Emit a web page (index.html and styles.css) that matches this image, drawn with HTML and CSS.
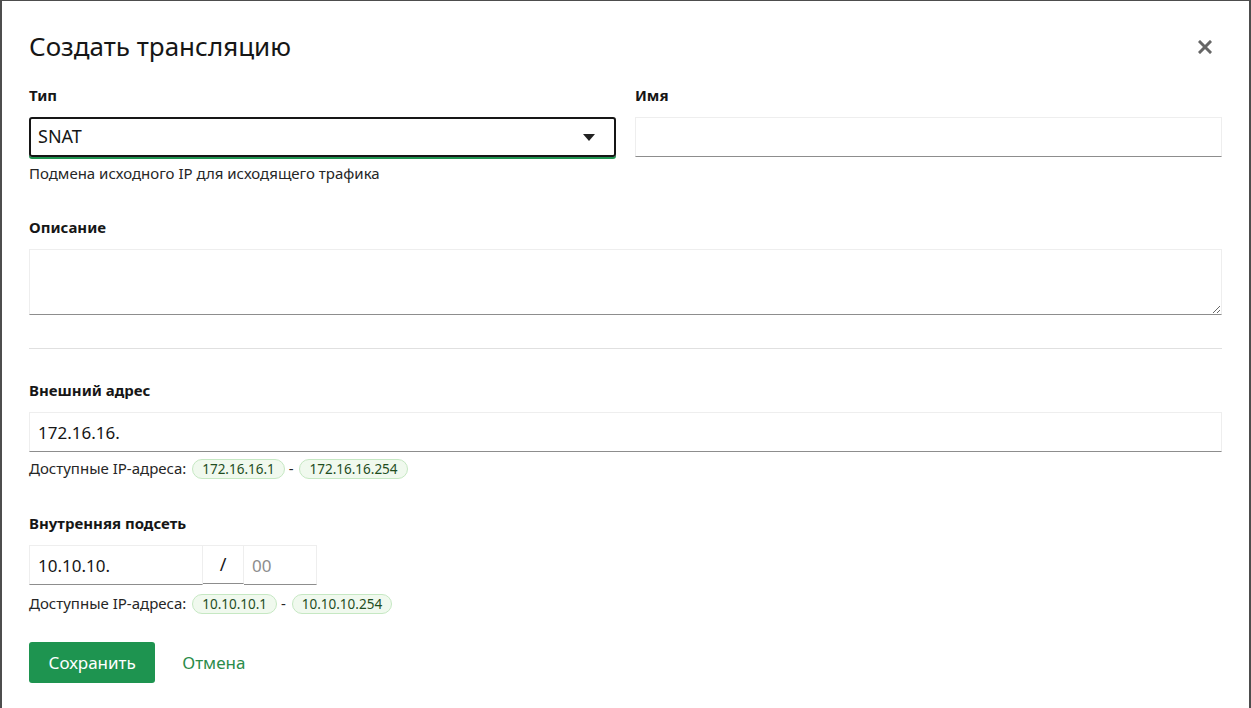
FILE: index.html
```html
<!DOCTYPE html>
<html lang="ru">

<head>
  <meta charset="utf-8" />
  <title>Создать трансляцию</title>
  <link rel="stylesheet" href="styles.css">
</head>

<body>
  <div class="modal">
    <div class="modal-header">
      <h2>Создать трансляцию</h2>
      <button class="close" type="button" aria-label="Закрыть">
        <svg width="14" height="14" viewBox="0 0 14 14">
          <path d="M2 2 L12 12 M12 2 L2 12" stroke="#666" stroke-width="3" stroke-linecap="square" />
        </svg>
      </button>
    </div>

    <form>
      <div class="row">
        <div class="field field-type">
          <label for="type">Тип</label>
          <div class="select">
            <span>SNAT</span>
            <svg width="12" height="7" viewBox="0 0 12 7"><path d="M0 0 H12 L6 7 Z" fill="#222" /></svg>
          </div>
          <p class="hint">Подмена исходного IP для исходящего трафика</p>
        </div>
        <div class="field">
          <label for="name">Имя</label>
          <input type="text" id="name" class="input">
        </div>
      </div>

      <div class="field field-descr">
        <label for="descr">Описание</label>
        <textarea id="descr" class="input textarea"></textarea>
      </div>

      <hr>

      <div class="field">
        <label for="ext">Внешний адрес</label>
        <input type="text" id="ext" class="input" value="172.16.16.">
        <p class="hint">Доступные IP-адреса: <span class="pill">172.16.16.1</span> - <span class="pill">172.16.16.254</span></p>
      </div>

      <div class="field field-last">
        <label for="net">Внутренняя подсеть</label>
        <div class="subnet">
          <input type="text" id="net" class="input net" value="10.10.10.">
          <span class="slash">/</span>
          <input type="text" class="input mask" placeholder="00">
        </div>
        <p class="hint hint-net">Доступные IP-адреса: <span class="pill">10.10.10.1</span> - <span class="pill">10.10.10.254</span></p>
      </div>

      <div class="actions">
        <button type="button" class="btn-primary">Сохранить</button>
        <button type="button" class="btn-link">Отмена</button>
      </div>
    </form>
  </div>
</body>

</html>
```

FILE: styles.css
```css
* {
  box-sizing: border-box;
}

body {
  margin: 0;
  height: 708px;
  overflow: hidden;
  background-color: #4d4d4d;
  color: #161616;
  font: 14px / 1.4 "Noto Sans", "Open Sans", sans-serif;
  padding: 1px 2px 0 2px;
}

.modal {
  background-color: #fff;
  height: 100%;
  padding: 0 27px;
}

.modal-header {
  display: flex;
  align-items: center;
  justify-content: space-between;
  height: 84px;
  padding-top: 7px;
}

.modal-header h2 {
  margin: 0;
  font-size: 26px;
  font-weight: 400;
  color: #161616;
}

.close {
  border: 0;
  background: none;
  padding: 0;
  margin-right: 10px;
  display: flex;
}

.row {
  display: grid;
  grid-template-columns: 1fr 1fr;
  column-gap: 19px;
}

.field {
  display: flex;
  flex-direction: column;
  margin-bottom: 34px;
}

.field-type {
  margin-bottom: 33px;
}

.field-descr {
  margin-bottom: 33px;
}

.field-last {
  margin-bottom: 28px;
}

label {
  font-weight: 700;
  font-size: 15px;
  height: 20px;
  margin-bottom: 12px;
}

.input {
  height: 40px;
  width: 100%;
  border: 1px solid #eeeeee;
  border-bottom-color: #8d8d8d;
  font: inherit;
  font-size: 17px;
  padding: 0 8px;
  color: #161616;
  outline: none;
}

.select {
  height: 40px;
  display: flex;
  align-items: center;
  justify-content: space-between;
  border: 2px solid #161616;
  border-radius: 3px;
  padding: 0 19px 0 7px;
  font-size: 18px;
  box-shadow: 0 2px 0 #1e9450;
}

.hint {
  margin: 6px 0 0;
  font-size: 15px;
  color: #262626;
}

.hint-net {
  margin-top: 8px;
}

.textarea {
  height: 66px;
  resize: vertical;
}

hr {
  border: 0;
  border-top: 1px solid #e0e0e0;
  margin: 0 0 31px;
}

.pill {
  display: inline-block;
  margin-left: 2px;
  padding: 0 9px;
  border: 1px solid #c6e8c3;
  border-radius: 10px;
  background-color: #f0f9ee;
  color: #1f4d1f;
  font-size: 13.5px;
  line-height: 18px;
}

.subnet {
  display: flex;
  width: 288px;
}

.subnet .net {
  width: 174px;
}

.slash {
  width: 41px;
  height: 39px;
  border-top: 1px solid #eeeeee;
  border-bottom: 1px solid #8d8d8d;
  border-right: 1px solid #eeeeee;
  display: flex;
  align-items: center;
  justify-content: center;
  font-size: 18px;
}

.subnet .mask {
  width: 73px;
  border-left: 0;
}

.subnet .mask::placeholder {
  color: #8d8d8d;
}

.actions {
  display: flex;
  align-items: center;
}

.btn-primary {
  height: 41px;
  padding: 0 19.5px;
  border: 0;
  border-radius: 3px;
  background-color: #1e9450;
  color: #fff;
  font: inherit;
  font-size: 17px;
}

.btn-link {
  border: 0;
  background: none;
  color: #2b8c4a;
  font: inherit;
  font-size: 17px;
  padding: 0 27px;
}
```
